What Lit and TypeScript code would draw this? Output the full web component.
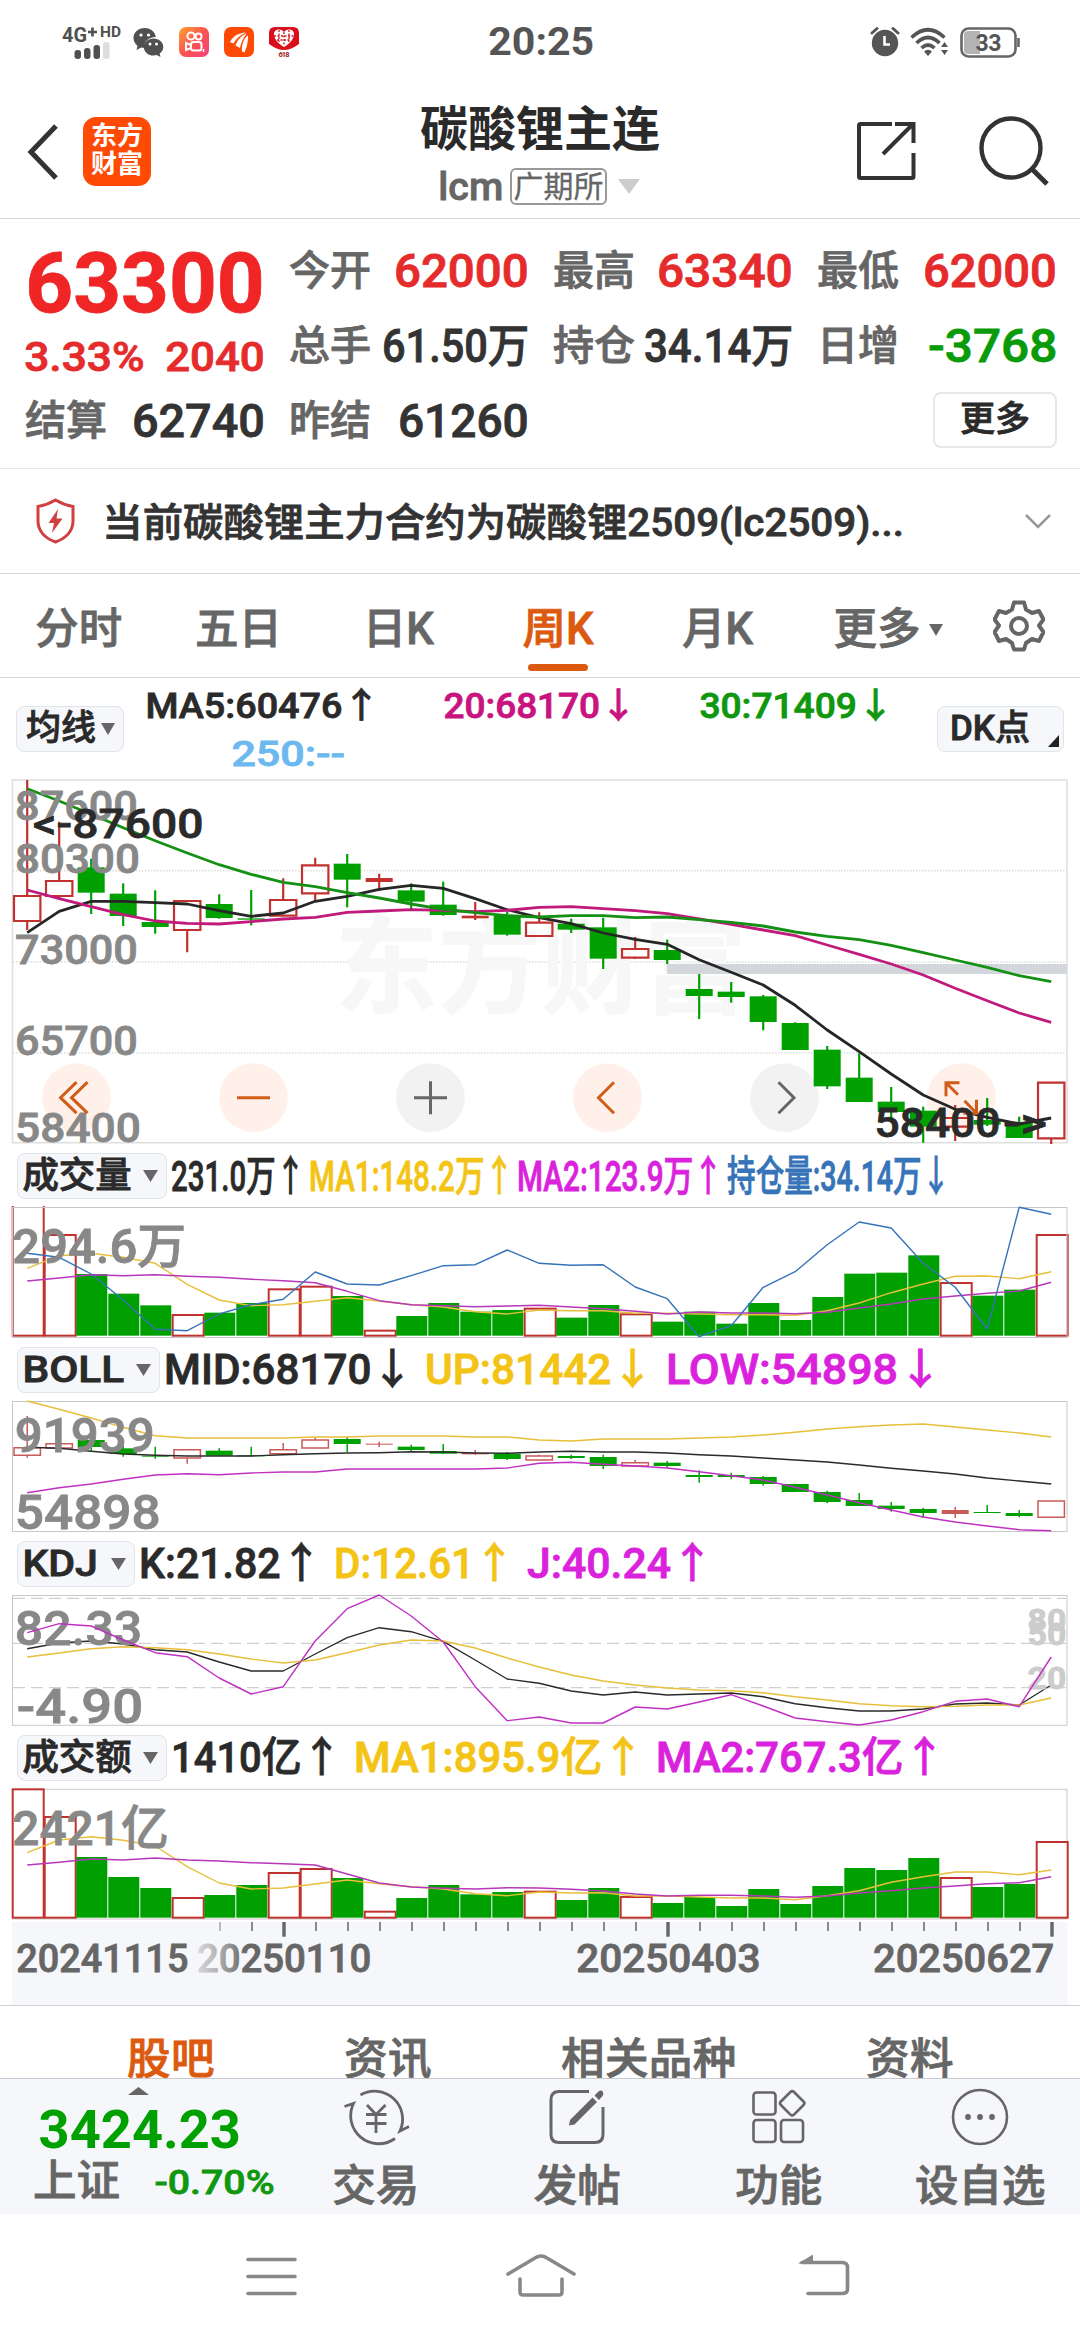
import { LitElement, html, svg, css } from "lit";
import { customElement, property } from "lit/decorators.js";
import { classMap } from "lit/directives/class-map.js";
import { styleMap } from "lit/directives/style-map.js";

const RED = "#c0322f";
const GREEN = "#00a000";
const INK = "#2a2a2a";
const YELLOW = "#f3c415";
const MAGENTA = "#da22dd";
const BLUE = "#3673b8";

/* ---------- text squeezed or stretched to a given ink width ---------- */
@customElement("fit-text")
class FitText extends LitElement {
  @property({ type: Number }) w = 100;
  @property() text = "";

  static styles = css`
    :host { display: inline-block; white-space: pre; flex: none; }
    .t { display: inline-block; transform-origin: 0 50%; }
  `;

  firstUpdated() {
    const t = this.renderRoot.querySelector(".t") as HTMLElement;
    const em = parseFloat(getComputedStyle(t).fontSize);
    const natural = t.offsetWidth;
    const bearing = em * 0.045;
    const arrowGap = /[↑↓]$/.test(this.text) ? em * 0.17 : 0;
    t.style.transform = `translateX(${-bearing}px) scaleX(${(this.w + bearing * 2 + arrowGap) / natural})`;
  }

  render() {
    return html`<div style=${styleMap({ width: `${this.w}px` })}><span class="t">${this.text}</span></div>`;
  }
}

/* ---------- chart data, in plot units ---------- */
const X = (v: number) => v / 2.9037;
const Y = (v: number) => v / 3;
const cx = (i: number) => 27.2 + 32 * i;

type Candle = [string, number, number, number, number];
const candles: Candle[] = [
  ["r", 30, 480, 378, 453], ["r", 155, 390, 333, 378], ["g", 266, 432, 292, 368], ["g", 340, 468, 371, 438],
  ["g", 361, 491, 456, 471], ["r", 393, 547, 393, 480], ["g", 373, 446, 402, 444], ["g", 360, 466, 445, 449],
  ["r", 325, 437, 390, 437], ["r", 263, 392, 286, 370], ["g", 252, 412, 281, 329], ["f", 311, 363, 324, 336],
  ["g", 340, 418, 361, 395], ["g", 335, 437, 404, 435], ["f", 396, 450, 437, 445], ["g", 425, 497, 437, 494],
  ["r", 427, 498, 458, 498], ["g", 446, 489, 461, 479], ["g", 443, 597, 472, 566], ["r", 501, 567, 537, 563],
  ["g", 509, 582, 540, 570], ["g", 612, 747, 657, 678], ["g", 636, 698, 665, 681], ["g", 675, 781, 679, 756],
  ["g", 757, 840, 759, 840], ["g", 828, 957, 839, 949], ["g", 850, 995, 923, 996], ["g", 951, 1045, 995, 1026],
  ["g", 1010, 1118, 1022, 1070], ["r", 1005, 1113, 1044, 1070], ["g", 984, 1068, 1050, 1064],
  ["g", 1040, 1104, 1058, 1104], ["r", 938, 1122, 938, 1105],
];
const ma5 = [488, 424, 394, 394, 398, 402, 422, 439, 429, 394, 379, 358, 346, 355, 386, 419, 443, 461, 489, 508, 523, 569, 607, 645, 706, 780, 845, 912, 975, 1018, 1042, 1062, 1044];
const ma20 = [360, 386, 410, 434, 453, 460, 462, 455, 447, 442, 427, 423, 419, 421, 425, 421, 412, 410, 416, 422, 431, 447, 463, 480, 497, 525, 553, 582, 615, 655, 692, 729, 757];
const ma30 = [56, 93, 133, 173, 212, 249, 284, 313, 337, 350, 368, 384, 402, 418, 428, 437, 441, 437, 437, 443, 441, 449, 457, 468, 486, 499, 509, 526, 548, 570, 592, 617, 635];

const barColors = "rrgggrggrrgrggggrggrgggggggggrggr";
const volTops = [160, 255, 372, 431, 466, 495, 488, 459, 418, 410, 438, 542, 498, 459, 485, 480, 476, 503, 465, 493, 515, 485, 521, 459, 510, 441, 371, 368, 316, 399, 437, 419, 255];
const volMa1 = [355, 317, 310, 322, 340, 403, 450, 467, 464, 454, 443, 453, 464, 471, 485, 492, 480, 482, 482, 490, 490, 492, 494, 494, 496, 482, 459, 428, 402, 379, 378, 386, 365];
const volMa2 = [393, 384, 374, 377, 374, 379, 382, 388, 392, 398, 424, 452, 464, 467, 470, 468, 466, 471, 476, 484, 492, 486, 489, 489, 491, 487, 474, 462, 447, 438, 430, 423, 397];
const openInt = [310, 322, 372, 450, 538, 542, 492, 464, 448, 366, 402, 405, 377, 347, 344, 300, 340, 346, 344, 411, 446, 560, 527, 412, 365, 284, 216, 234, 340, 412, 537, 172, 193];

const bollCandles: Candle[] = [
  ["r", 798, 923, 893, 916], ["r", 880, 894, 881, 894], ["g", 862, 906, 870, 891], ["g", 885, 920, 895, 912],
  ["g", 890, 926, 917, 920], ["r", 898, 941, 899, 924], ["g", 895, 917, 902, 917], ["g", 890, 918, 916, 919],
  ["r", 879, 911, 899, 911], ["r", 863, 895, 870, 894], ["g", 861, 907, 867, 882], ["f", 875, 891, 881, 884],
  ["g", 884, 906, 890, 900], ["g", 882, 911, 903, 911], ["f", 900, 914, 909, 913], ["g", 906, 930, 911, 927],
  ["r", 914, 931, 918, 930], ["g", 914, 927, 918, 924], ["g", 914, 957, 921, 948], ["r", 930, 949, 938, 948],
  ["g", 933, 953, 938, 948], ["g", 961, 998, 975, 981], ["g", 968, 988, 975, 981], ["g", 978, 1007, 981, 1002],
  ["g", 1002, 1026, 1002, 1026], ["g", 1022, 1060, 1026, 1056], ["g", 1029, 1067, 1050, 1068],
  ["g", 1056, 1085, 1067, 1077], ["g", 1073, 1104, 1077, 1089], ["f", 1071, 1104, 1080, 1092],
  ["g", 1065, 1088, 1086, 1089], ["g", 1080, 1102, 1089, 1098], ["r", 1052, 1103, 1053, 1102],
];
const bollUp = [753, 778, 804, 832, 857, 864, 864, 864, 864, 861, 861, 858, 858, 858, 861, 861, 870, 873, 867, 867, 867, 864, 861, 855, 847, 837, 830, 825, 822, 831, 840, 849, 861];
const bollMid = [892, 895, 904, 912, 916, 918, 918, 918, 914, 911, 909, 908, 905, 906, 909, 910, 906, 904, 906, 906, 909, 914, 918, 924, 930, 936, 945, 955, 963, 972, 984, 993, 1002];
const bollLow = [1028, 1013, 1002, 988, 975, 971, 974, 969, 966, 966, 957, 957, 957, 957, 957, 954, 940, 937, 943, 948, 954, 965, 977, 990, 1012, 1035, 1058, 1080, 1101, 1116, 1128, 1139, 1142];

const kLine = [326, 309, 303, 312, 329, 336, 366, 393, 393, 342, 293, 263, 275, 304, 360, 417, 430, 453, 465, 456, 465, 462, 459, 470, 491, 503, 513, 513, 507, 492, 489, 495, 435];
const dLine = [351, 339, 326, 320, 323, 329, 342, 357, 369, 360, 338, 315, 300, 303, 324, 354, 381, 405, 423, 435, 444, 450, 452, 458, 470, 480, 491, 497, 500, 499, 495, 495, 474];
const jLine = [278, 251, 258, 300, 338, 350, 414, 462, 440, 303, 206, 165, 228, 306, 440, 542, 531, 549, 549, 501, 507, 486, 464, 498, 534, 545, 555, 540, 515, 484, 477, 500, 351];

const amtTops = [748, 831, 951, 1011, 1044, 1074, 1065, 1035, 999, 987, 1014, 1115, 1074, 1035, 1063, 1056, 1055, 1080, 1044, 1071, 1089, 1071, 1098, 1047, 1092, 1038, 984, 990, 954, 1014, 1041, 1032, 906];
const amtMa1 = [938, 900, 890, 901, 918, 980, 1029, 1047, 1044, 1032, 1020, 1031, 1040, 1047, 1061, 1067, 1056, 1059, 1058, 1068, 1068, 1071, 1074, 1074, 1079, 1067, 1052, 1027, 1010, 996, 996, 1004, 990];
const amtMa2 = [975, 967, 957, 960, 954, 960, 963, 968, 971, 975, 1002, 1029, 1041, 1045, 1047, 1043, 1044, 1048, 1053, 1062, 1068, 1066, 1066, 1068, 1072, 1068, 1059, 1052, 1044, 1038, 1031, 1028, 1010];

/* ---------- drawing helpers ---------- */
const line = (ys: number[], color: string, width: number) =>
  svg`<polyline fill="none" stroke=${color} stroke-width=${width} stroke-linejoin="round"
    points=${ys.map((y, i) => `${cx(i).toFixed(1)},${Y(y).toFixed(1)}`).join(" ")} />`;

const candle = (list: Candle[], sw: number, red: string) =>
  list.map(([kind, hi, lo, top, bot], i) => {
    const x = cx(i);
    const color = kind === "g" ? GREEN : red;
    const t = Y(top), b = Y(bot);
    if (kind === "r") {
      return svg`<path fill="none" stroke=${color} stroke-width=${sw}
        d="M${x} ${Y(hi)}V${t}M${x} ${b}V${Y(lo)}M${x - 13.2} ${t}H${x + 13.2}V${b}H${x - 13.2}Z" />`;
    }
    return svg`<path stroke=${color} stroke-width=${sw} d="M${x} ${Y(hi)}V${Y(lo)}" />
      <rect x=${x - 13.5} y=${t} width="27" height=${Math.max(1, b - t)} fill=${color} />`;
  });

const bars = (tops: number[], base: number) =>
  tops.map((top, i) => {
    const left = 11.5 + 32 * i;
    const t = Y(top), b = Y(base);
    return barColors[i] === "r"
      ? svg`<rect x=${left + 1.2} y=${t} width="31" height=${b - t} fill="#fff" stroke=${RED} stroke-width="2" />`
      : svg`<rect x=${left + 0.8} y=${t} width="31" height=${b - t} fill=${GREEN} />`;
  });

const frame = (y1: number, y2: number, color = "#c8c8c8", w = 1) =>
  svg`<rect x="12.5" y=${y1} width="1054.5" height=${y2 - y1} fill="none" stroke=${color} stroke-width=${w} />`;

const label = (text: string, x1: number, x2: number, base: number, size: number, fill = "#888", weight = 500) =>
  svg`<text x=${x1 - size * 0.045} y=${base} font-size=${size} font-weight=${weight} fill=${fill} stroke=${fill} stroke-width=".8"
    textLength=${x2 - x1 + size * 0.09} lengthAdjust="spacingAndGlyphs">${text}</text>`;

const tri = (w: number, h: number, color = "#666") =>
  html`<svg class="tri" width=${w} height=${h} viewBox="0 0 10 10" preserveAspectRatio="none"><path fill=${color} d="M0 0H10L5 10Z" /></svg>`;

@customElement("app-root")
class AppRoot extends LitElement {
  static styles = css`
    :host {
      display: block; width: 1080px; height: 2340px; overflow: hidden; background: #fff; color: #2a2a2a;
      font-family: Roboto, "Noto Sans CJK SC", sans-serif; font-weight: 500; -webkit-text-stroke: 0.8px currentColor;
    }
    * { box-sizing: border-box; }
    svg { display: block; flex: none; }
    svg text { font-family: Roboto, "Noto Sans CJK SC", sans-serif; -webkit-text-stroke: initial; }
    .row { display: flex; align-items: center; }

    .status { height: 84px; padding: 0 60px 0 62px; display: grid; grid-template-columns: 1fr auto 1fr; align-items: center; }
    .status .left { gap: 15px; }
    .status .right { justify-content: flex-end; gap: 10px; }
    .clock { font-size: 39px; font-weight: 700; color: #555; -webkit-text-stroke-width: 0; }

    .header { height: 135px; padding: 0 31px; border-bottom: 1px solid #d4d4d4; display: grid; grid-template-columns: 1fr auto 1fr; align-items: center; }
    .brand { gap: 24px; padding-top: 1px; margin-left: -4px; }
    .logo { width: 68px; height: 69px; border-radius: 13px; background: #ff4a05; color: #fff; font-size: 26px; line-height: 28px; font-weight: 700; text-align: center; padding-top: 5px; -webkit-text-stroke-width: 0; }
    .names { display: flex; flex-direction: column; align-items: center; padding-top: 1px; }
    .title { font-size: 48px; line-height: 62px; font-weight: 600; padding-top: 3px; -webkit-text-stroke-width: 0; }
    .code { height: 42px; gap: 8px; font-size: 38px; color: #666; padding: 0 0 0 0; margin-top: 5px; }
    .exch { height: 37px; width: 97px; border: 2px solid #999; border-radius: 6px; font-size: 30px; line-height: 33px; text-align: center; font-weight: 400; -webkit-text-stroke-width: 0.3px; }
    .actions { justify-content: flex-end; gap: 62px; }
    .code .tri { margin-left: 3px; }

    .quote { height: 250px; padding: 15px 26px 0; border-bottom: 1px solid #e6e6e6; display: grid; grid-template-columns: repeat(4, 237px); column-gap: 27px; grid-template-rows: 75px 75px 75px; }
    .cell { display: flex; justify-content: space-between; align-items: center; font-size: 46px; line-height: 75px; }
    .cell .k { font-size: 41px; color: #666; margin-left: -1px; }
    .red { color: #e52b2b; } .green { color: #0a9b0a; } .dark { color: #333; }
    .last { grid-row: 1 / 3; color: #f02525; display: flex; flex-direction: column; }
    .price { font-size: 84px; font-weight: 700; line-height: 96px; padding: 2px 0 0 3px; height: 98px; }
    .chg { display: flex; justify-content: space-between; font-size: 40px; line-height: 48px; color: #e52b2b; }
    .last .chg { padding-top: 2px; }
    .more { justify-self: end; align-self: center; width: 124px; height: 56px; border: 2px solid #e8e8e8; border-radius: 8px; font-size: 35px; line-height: 51px; text-align: center; position: relative; top: -2px; left: 2px; }

    .notice { height: 105px; padding: 0 30px 0 36px; border-bottom: 1px solid #d8d8d8; font-size: 39px; color: #333; line-height: 60px; }
    .notice fit-text { margin-left: 29px; padding-top: 4px; }
    .notice .chev { margin-left: auto; margin-right: -2px; }

    .tabs { height: 104px; border-bottom: 1px solid #d8d8d8; font-size: 43.5px; line-height: 60px; color: #666; padding-right: 35px; }
    .tab { display: flex; flex-direction: column; align-items: center; padding-top: 25px; height: 102px; width: 159.7px; flex: none; position: relative; left: -1px; }
    .tab.wide { width: 195px; align-items: flex-start; padding-left: 36px; }
    .tab .inner { gap: 9px; }
    .tabs .gear { margin-left: auto; }
    .tab.on { color: #dc5a10; }
    .tab.on::after { content: ""; width: 60px; height: 7px; border-radius: 4px; background: #dc5a10; margin-top: 4px; }

    .malegend { height: 101px; padding: 0 17px 0 16px; display: grid; grid-template-columns: 131px 1fr 126px; align-items: center; font-size: 35px; line-height: 48px; }
    .mas { height: 100px; padding-top: 4px; }
    .mas .row { gap: 72px; }
    .mas .second { padding-left: 86px; color: #6cb9f0; }
    .pink { color: #c9147f; } .mgreen { color: #0f980f; }
    .chip { display: flex; align-items: center; justify-content: space-between; height: 46px; border: 1px solid #e0e3e7; border-radius: 8px; background: #f6f7fa; font-size: 36px; line-height: 42px; flex: none; padding: 0 8px 0 6px; }
    .chip.avg { width: 108px; font-size: 35px; padding: 0 8px 0 9px; }
    .chip.dk { width: 127px; font-size: 35px; padding: 0 4px 0 12px; }
    .dk svg { align-self: flex-end; margin-bottom: 4px; }

    .legend { display: flex; align-items: center; height: 61px; padding-left: 17px; font-size: 42px; line-height: 61px; }
    .legend.vol { height: 62px; padding-top: 2px; }
    .w150 { width: 150px; } .w143 { width: 143px; } .w118 { width: 118px; }
    .vals { display: flex; gap: 23px; margin-left: 6px; }
    .vol .vals { gap: 14.5px; }

    .subtabs { height: 74px; border-top: 1px solid #d0d0d6; border-bottom: 1px solid #c8c8d0; overflow: hidden; font-size: 43.5px; line-height: 60px; color: #666; display: flex; padding: 24px 0 0 127px; letter-spacing: 0.4px; }
    .subtabs .a { width: 217px; } .subtabs .b { width: 305px; }
    .subtabs .on { color: #dc5a10; }

    .dock { height: 135px; background: #f6f7fa; display: grid; grid-template-columns: 275px repeat(4, 201.5px); color: #666; }
    .index { padding-left: 33px; display: flex; flex-direction: column; }
    .index .tri { transform: rotate(180deg); margin: 8px 0 0 95px; }
    .idx { color: #00a000; font-size: 54px; font-weight: 700; line-height: 56px; height: 56px; padding-left: 8px; margin-top: 7px; -webkit-text-stroke-width: 0; }
    .idxrow { display: flex; justify-content: space-between; font-size: 43.5px; line-height: 48px; align-items: center; width: 240px; }
    .idxrow .pct { font-size: 34px; color: #0f980f; }
    .tool { display: flex; flex-direction: column; align-items: center; font-size: 43.5px; line-height: 60px; padding-top: 8px; }
    .tool span { padding-top: 8px; }

    .nav { height: 126px; }
  `;

  statusBar() {
    return html`<div class="status">
      <div class="row left">
        <svg width="60" height="40" viewBox="0 0 60 40">
          <text x="0" y="20" font-size="21" font-weight="700" fill="#505050" textLength="25" lengthAdjust="spacingAndGlyphs">4G</text>
          <path d="M26 10H35M30.5 5.5V14.5" stroke="#505050" stroke-width="2.6" />
          <text x="38" y="15" font-size="15" font-weight="700" fill="#505050" textLength="21" lengthAdjust="spacingAndGlyphs">HD</text>
          <rect x="12.500" y="28" width="6.500" height="9" rx="3" fill="#505050" /><rect x="22" y="26" width="6.500" height="11" rx="3" fill="#505050" />
          <rect x="31.500" y="23" width="6.500" height="14" rx="3" fill="#505050" /><rect x="41" y="20" width="6.500" height="17" rx="3" fill="#ddd" />
        </svg>
        <svg width="31" height="31" viewBox="0 0 31 31" style="margin-left:-4px">
          <path fill="#505050" d="M12 1C5 1 .5 5.500.5 11c0 3.200 1.500 5.800 4 7.700L3.500 23l4.700-2.500c1 .3 2.200.5 3.300.5-.9-6 3.500-10.700 11.300-10.900C22 4.500 17.500 1 12 1Z" />
          <path fill="#505050" d="M20.500 11.500c-5.500 0-9.700 3.700-9.700 8.500s4.200 8.600 9.700 8.600c1.100 0 2.200-.2 3.200-.5l3.800 2-.9-3.500c2.300-1.600 3.700-3.900 3.700-6.600 0-4.800-4.300-8.500-9.800-8.500Z" />
          <g fill="#fff"><circle cx="8" cy="8" r="1.600" /><circle cx="15.500" cy="8" r="1.600" /><circle cx="17" cy="17" r="1.500" /><circle cx="23.500" cy="17" r="1.500" /></g>
        </svg>
        <svg width="30" height="30" viewBox="0 0 30 30">
          <defs><linearGradient id="ks" x1="0" y1="0" x2="1" y2="1"><stop offset="0" stop-color="#ffa12e" /><stop offset=".5" stop-color="#fb5550" /><stop offset="1" stop-color="#f2417c" /></linearGradient></defs>
          <rect width="30" height="30" rx="7" fill="url(#ks)" />
          <g fill="none" stroke="#fff" stroke-width="2"><circle cx="12" cy="9" r="3.600" /><circle cx="19.500" cy="9.500" r="3" /><rect x="12" y="15" width="10.500" height="8.500" rx="2.500" /><path d="M12 18l-5-2v7l5-2" /></g>
          <path d="M24.500 22v3" stroke="#fff" stroke-width="1.500" />
        </svg>
        <svg width="30" height="30" viewBox="0 0 30 30">
          <rect width="30" height="30" rx="7" fill="#ff4a05" />
          <path fill="#fff" d="M6 15C10 8 15 6 22 5.500C16 8 12 12 9.500 16.500ZM11.500 18.500C14 12 18 8 23 6.500C20 10 17.500 14 16 21ZM18 24.500C17.500 17 20 11 24 8.500C24 15 23 20 20.500 25.500Z" />
        </svg>
        <svg width="30" height="30" viewBox="0 0 30 30">
          <path fill="#d8101c" d="M6 0H24Q30 0 30 6V17Q22 23 15 23Q8 23 0 17V6Q0 0 6 0Z" />
          <path fill="#fff" d="M15 20C8 16 5 11 5 7C5 2 12 1 15 5C18 1 25 2 25 7C25 11 22 16 15 20Z" />
          <path d="M5 9H25M8 13H22M10 3V15M15 5V19M20 3V15" stroke="#d8101c" stroke-width="1.300" stroke-dasharray="2 1.500" />
          <text x="9.500" y="29.500" font-size="7.500" font-weight="700" fill="#a02020" textLength="11">618</text>
        </svg>
      </div>
      <fit-text class="clock" w="103" text="20:25"></fit-text>
      <div class="row right">
        <svg width="30" height="32" viewBox="0 0 30 32"><circle cx="15" cy="17" r="13.200" fill="#555" /><path d="M2 7L7 2.500M28 7L23 2.500" stroke="#555" stroke-width="3" stroke-linecap="round" /><path d="M14.500 10V18.500H20" fill="none" stroke="#fff" stroke-width="2.600" /></svg>
        <svg width="40" height="30" viewBox="0 0 40 30"><g fill="none" stroke="#555" stroke-width="3.600"><path d="M1.500 10.500Q18 -5 34.500 10.500" /><path d="M6.500 16Q18 5 29.500 16" /><path d="M11.500 21Q18 15 24.500 21" /></g><path fill="#555" d="M14 24.500Q18 21 22 24.500L18 29ZM31 20l3.500-5 3.500 5ZM31 23h7l-3.500 5Z" /></svg>
        <svg width="60" height="31" viewBox="0 0 60 31"><rect x="1.500" y="1.500" width="54" height="28" rx="7" fill="#fff" stroke="#666" stroke-width="2.600" /><path fill="#b4b4b4" d="M4 8Q4 4 8 4H20V27H8Q4 27 4 23Z" /><path d="M58.500 11V20" stroke="#666" stroke-width="2.600" />
          <text x="15.500" y="23.500" font-size="23" font-weight="700" fill="#555" textLength="26">33</text></svg>
      </div>
    </div>`;
  }

  header() {
    return html`<div class="header">
      <div class="row brand">
        <svg width="32" height="56" viewBox="0 0 32 56"><path d="M29 2L4 28L29 54" fill="none" stroke="#333" stroke-width="5" /></svg>
        <div class="logo">东方<br />财富</div>
      </div>
      <div class="names">
        <div class="title">碳酸锂主连</div>
        <div class="row code"><fit-text w="62" text="lcm"></fit-text><div class="exch">广期所</div>${tri(22, 15, "#ccc")}</div>
      </div>
      <div class="row actions">
        <svg width="60" height="62" viewBox="0 0 60 62"><path d="M35 4H3.500Q2 4 2 5.500V56.500Q2 58 3.500 58H55Q56.500 58 56.500 56.500V33M38 4H56.500V23M55 5L26 34" fill="none" stroke="#333" stroke-width="4" /></svg>
        <svg width="70" height="72" viewBox="0 0 70 72"><circle cx="32" cy="33" r="29.500" fill="none" stroke="#333" stroke-width="4.400" /><path d="M53 54L68 69" stroke="#333" stroke-width="5" /></svg>
      </div>
    </div>`;
  }

  cell(k: string, v: string, w: number, cls: string) {
    return html`<div class="cell ${cls}"><span class="k">${k}</span><fit-text w=${w} text=${v}></fit-text></div>`;
  }

  quote() {
    return html`<div class="quote">
      <div class="last">
        <div class="price"><fit-text w="232" text="63300"></fit-text></div>
        <div class="chg"><fit-text w="117" text="3.33%"></fit-text><fit-text w="96" text="2040"></fit-text></div>
      </div>
      ${this.cell("今开", "62000", 131, "red")}${this.cell("最高", "63340", 132, "red")}${this.cell("最低", "62000", 130, "red")}
      ${this.cell("总手", "61.50万", 143, "dark")}${this.cell("持仓", "34.14万", 145, "dark")}${this.cell("日增", "-3768", 125, "green")}
      ${this.cell("结算", "62740", 129, "dark")}${this.cell("昨结", "61260", 127, "dark")}
      <span></span><div class="more">更多</div>
    </div>`;
  }

  notice() {
    return html`<div class="row notice">
      <svg width="39" height="46" viewBox="0 0 39 46"><path d="M19.500 2Q28 7 37 8.500V24Q36 38 19.500 44Q3 38 2 24V8.500Q11 7 19.500 2Z" fill="none" stroke="#cf4040" stroke-width="3" /><path fill="#cf4040" d="M22 11L12.500 25H18L16 35L26.500 20.500H20.500Z" /></svg>
      <fit-text w="798" text="当前碳酸锂主力合约为碳酸锂2509(lc2509)..."></fit-text>
      <svg class="chev" width="28" height="18" viewBox="0 0 28 18"><path d="M2 3L14 15L26 3" fill="none" stroke="#999" stroke-width="2.500" /></svg>
    </div>`;
  }

  tabs() {
    const items = ["分时", "五日", "日K", "周K", "月K"];
    return html`<div class="row tabs">
      ${items.map((t) => html`<div class=${classMap({ tab: true, on: t === "周K" })}>${t}</div>`)}
      <div class="tab wide"><div class="row inner">更多${tri(14, 12)}</div></div>
      <svg class="gear" width="52" height="52" viewBox="0 0 52 52"><path fill="none" stroke="#666" stroke-width="4" stroke-linejoin="round" d="M21 2.500H31L33 9.500L39 13L46 11L50.500 19.500L46 25.500L50.500 32L46 41L39 39L33 43L31 49.500H21L19 43L13 39L6 41L1.500 32L6 25.500L1.500 19.500L6 11L13 13L19 9.500Z" /><circle cx="26" cy="26" r="8" fill="none" stroke="#666" stroke-width="4" /></svg>
    </div>`;
  }

  maLegend() {
    return html`<div class="malegend">
      <div class="chip avg"><span>均线</span>${tri(14, 12)}</div>
      <div class="mas">
        <div class="row"><fit-text w="226" text="MA5:60476↑"></fit-text><fit-text class="pink" w="184" text="20:68170↓"></fit-text><fit-text class="mgreen" w="185" text="30:71409↓"></fit-text></div>
        <div class="second"><fit-text w="111" text="250:--"></fit-text></div>
      </div>
      <div class="chip dk"><span>DK点</span><svg width="11" height="12" viewBox="0 0 11 12"><path fill="#222" d="M11 0V12H0Z" /></svg></div>
    </div>`;
  }

  mainChart() {
    const prices: [string, number, number][] = [["87600", 136, 150], ["80300", 138, 308], ["73000", 136, 582], ["65700", 136, 855], ["58400", 139, 1116]];
    const buttons: [number, boolean, string][] = [
      [76.5, true, "M0 -15.500L-16 0L0 15.500M11 -15.500L-5 0L11 15.500"],
      [253.5, true, "M-16.500 0H16.500"],
      [430.5, false, "M-16.500 0H16.500M0 -16.500V16.500"],
      [607.5, true, "M6.500 -15.500L-9 0L6.500 15.500"],
      [784.5, false, "M-6 -15.500L9.500 0L-6 15.500"],
      [961.5, true, "M-15.500 -1.500V-15H-2M-15 -14.500L-3.500 -3M15 2V15.500H2M3 3L14.500 15"],
    ];
    return html`<svg width="1080" height="365" viewBox="0 9 1080 365">
      ${[302, 576, 849].map((y) => svg`<path d="M13 ${Y(y)}H1066" stroke="#ddd" stroke-width="1.500" stroke-dasharray="1.500 1.500" />`)}
      ${label("东方财富", 340, 742, 235, 106, "#f7f7f7", 700)}
      ${frame(10, 372.7, "#dfdfdf", 1.6)}
      ${buttons.map(([x, warm]) => svg`<circle cx=${x} cy="327.700" r="34.400" fill=${warm ? "#fff1ea" : "#f2f2f2"} />`)}
      <rect x="667" y="194" width="400" height="10" fill="#d3d7dc" />
      ${candle(candles, 2.2, RED)}
      ${line(ma5, "#262626", 2.8)}${line(ma20, "#bf1a7c", 2.8)}${line(ma30, "#149014", 2.8)}
      ${prices.map(([t, x2, b]) => label(t, 17, x2, Y(b), 41.5, "#888"))}
      ${buttons.map(([x, warm, d]) => svg`<path transform="translate(${x} 327.700)" d=${d} fill="none" stroke=${warm ? "#d05c18" : "#666"} stroke-width="3" />`)}
      ${label("<-87600", 35, 201.5, 68, 41.5, INK)}
      ${label("58400", 876.5, 998.5, 366.7, 41.5, INK)}
      ${label("->", 1005, 1045, 366.7, 41.5, INK)}
    </svg>`;
  }

  legend(cls: string, chip: string, name: string, nameW: number, vals: [string, number, string][]) {
    return html`<div class="legend ${cls}">
      <div class="chip ${chip}"><fit-text w=${nameW} text=${name}></fit-text>${tri(15, 12)}</div>
      <div class="vals">${vals.map(([t, w, c]) => html`<fit-text style=${styleMap({ color: c })} w=${w} text=${t}></fit-text>`)}</div>
    </div>`;
  }

  render() {
    return html`
      ${this.statusBar()}${this.header()}${this.quote()}${this.notice()}${this.tabs()}${this.maLegend()}${this.mainChart()}
      ${this.legend("vol", "w150", "成交量", 106, [["231.0万↑", 123, INK], ["MA1:148.2万↑", 194, YELLOW], ["MA2:123.9万↑", 195, MAGENTA], ["持仓量:34.14万↓", 212, BLUE]])}
      <svg width="1080" height="133" viewBox="0 56 1080 133">
        ${bars(volTops, 557)}${frame(57.5, 187.5)}
        ${line(volMa1, "#e8bf3a", 1.4)}${line(volMa2, "#b637b9", 1.4)}${line(openInt, BLUE, 1.4)}
        ${label("294.6万", 14.5, 184, 113.3, 48, "#888")}
      </svg>
      ${this.legend("", "w143", "BOLL", 98, [["MID:68170↓", 238, INK], ["UP:81442↓", 218, YELLOW], ["LOW:54898↓", 266, MAGENTA]])}
      <svg width="1080" height="133" viewBox="0 250 1080 133">
        ${frame(251.5, 381.5)}${candle(bollCandles, 1.5, "#c85a58")}
        ${line(bollUp, "#e8bf3a", 1.4)}${line(bollMid, "#2a2a2a", 1.4)}${line(bollLow, "#c030c3", 1.4)}
        ${label("91939", 17, 152.5, 302, 48, "#888")}${label("54898", 17, 158.5, 379, 48, "#888")}
      </svg>
      ${this.legend("", "w118", "KDJ", 72, [["K:21.82↑", 172, INK], ["D:12.61↑", 170, YELLOW], ["J:40.24↑", 176, MAGENTA]])}
      <svg width="1080" height="133" viewBox="0 54 1080 133">
        ${frame(55.5, 185.3)}
        ${[175, 310, 443].map((y) => svg`<path d="M13 ${Y(y)}H1066" stroke="#d0d0d0" stroke-width="1.300" stroke-dasharray="12 6" />`)}
        ${line(kLine, "#2a2a2a", 1.4)}${line(dLine, "#e8bf3a", 1.4)}
        ${label("82.33", 17, 140, 105.3, 48, "#888")}${label("-4.90", 19, 141, 183.3, 48, "#888")}
        ${label("80", 1029, 1065, 90.5, 31, "#ccc", 700)}${label("50", 1029, 1065, 104.6, 31, "#ccc", 700)}${label("20", 1029, 1065, 149, 31, "#ccc", 700)}
        ${line(jLine, "#c030c3", 1.4)}
      </svg>
      ${this.legend("", "w150", "成交额", 106, [["1410亿↑", 160, INK], ["MA1:895.9亿↑", 279, YELLOW], ["MA2:767.3亿↑", 278, MAGENTA]])}
      <svg width="1080" height="217" viewBox="0 248 1080 217">
        <defs><linearGradient id="fade" gradientUnits="userSpaceOnUse" x1="190" y1="0" x2="246" y2="0"><stop offset="0" stop-color="#e4e4e6" /><stop offset=".45" stop-color="#b8b8b8" /><stop offset="1" stop-color="#666" /></linearGradient></defs>
        <rect x="12" y="382" width="1055.500" height="83" fill="#f6f7fa" />
        ${frame(249.3, 379)}${bars(amtTops, 1133)}
        ${line(amtMa1, "#e8bf3a", 1.4)}${line(amtMa2, "#b637b9", 1.4)}
        ${label("2421亿", 14.5, 166.5, 305, 48, "#888")}
        ${Array.from({ length: 27 }, (_, n) => n + 6).map((i) => {
          const major = (i - 8) % 12 === 0;
          return svg`<path d="M${cx(i) + 0.8} 382V${major ? 396.7 : 391}" stroke=${i === 6 ? "#bbb" : major ? "#666" : "#888"} stroke-width=${major ? 3.4 : 2} />`;
        })}
        ${label("20241115", 18, 186.7, 431.7, 38, "#666")}${label("20250110", 198.7, 369.5, 431.7, 38, "url(#fade)")}
        ${label("20250403", 578, 758.7, 431.7, 38, "#666")}${label("20250627", 874.7, 1052.5, 431.7, 38, "#666")}
      </svg>
      <div class="subtabs"><span class="a on">股吧</span><span class="a">资讯</span><span class="b">相关品种</span><span>资料</span></div>
      <div class="dock">
        <div class="index">
          ${tri(21, 8)}
          <div class="idx"><fit-text w="198" text="3424.23"></fit-text></div>
          <div class="idxrow"><span>上证</span><fit-text class="pct" w="117" text="-0.70%"></fit-text></div>
        </div>
        <div class="tool">
          <svg width="68" height="62" viewBox="0 0 68 62"><g fill="none" stroke="#666" stroke-width="2.800"><path d="M18.500 8A28 28 0 0 1 58 44L67 39.500" /><path d="M53 51.500A28 28 0 0 1 11.500 16.500L2.500 19.500" /></g>
            <path d="M25 18L34 27.500L43.500 18M34 27V46M24 27.500H44.500M24 36.500H44.500" fill="none" stroke="#666" stroke-width="2.800" /></svg>
          <span>交易</span>
        </div>
        <div class="tool">
          <svg width="58" height="62" viewBox="0 0 58 62"><path d="M41 4.500H11Q3 4.500 3 12.500V47.500Q3 55.500 11 55.500H47Q55 55.500 55 47.500V20" fill="none" stroke="#666" stroke-width="3" /><path fill="#666" d="M21 38.500L22 33L44.500 10.500L49 15L26.500 37.500ZM46.500 8.500L50.500 4.500Q53.500 2.500 55 5Q56 7 54.500 9L51 13Z" /></svg>
          <span>发帖</span>
        </div>
        <div class="tool">
          <svg width="56" height="62" viewBox="0 0 56 62"><g fill="none" stroke="#666" stroke-width="2.600"><rect x="2.500" y="5.500" width="22" height="22" rx="3" /><rect x="2.500" y="33" width="22" height="22" rx="3" /><rect x="30" y="33" width="22" height="22" rx="3" /><rect x="32" y="7" width="18.500" height="18.500" rx="2.500" transform="rotate(45 41.200 16.200)" /></g></svg>
          <span>功能</span>
        </div>
        <div class="tool">
          <svg width="58" height="62" viewBox="0 0 58 62"><circle cx="29" cy="30" r="27" fill="none" stroke="#666" stroke-width="2.600" /><g fill="#666"><circle cx="17" cy="30" r="2.900" /><circle cx="29" cy="30" r="2.900" /><circle cx="41" cy="30" r="2.900" /></g></svg>
          <span>设自选</span>
        </div>
      </div>
      <svg class="nav" width="1080" height="126" viewBox="0 0 1080 126"><g fill="none" stroke="#888" stroke-width="3.600" stroke-linecap="round" stroke-linejoin="round">
        <path d="M248 45.500H295M248 62.500H295M248 79.500H295" />
        <path d="M508 60L535 44Q541 40 547 44L574 60M520 65V78Q520 81 523 81H559Q562 81 562 78V65" />
        <path d="M808 79.500H842Q847.500 79.500 847.500 75V53.500Q847.500 48.500 842 48.500H802" /></g><path fill="#888" d="M798 49.500L813 40.500V50Z" /></svg>
    `;
  }
}
